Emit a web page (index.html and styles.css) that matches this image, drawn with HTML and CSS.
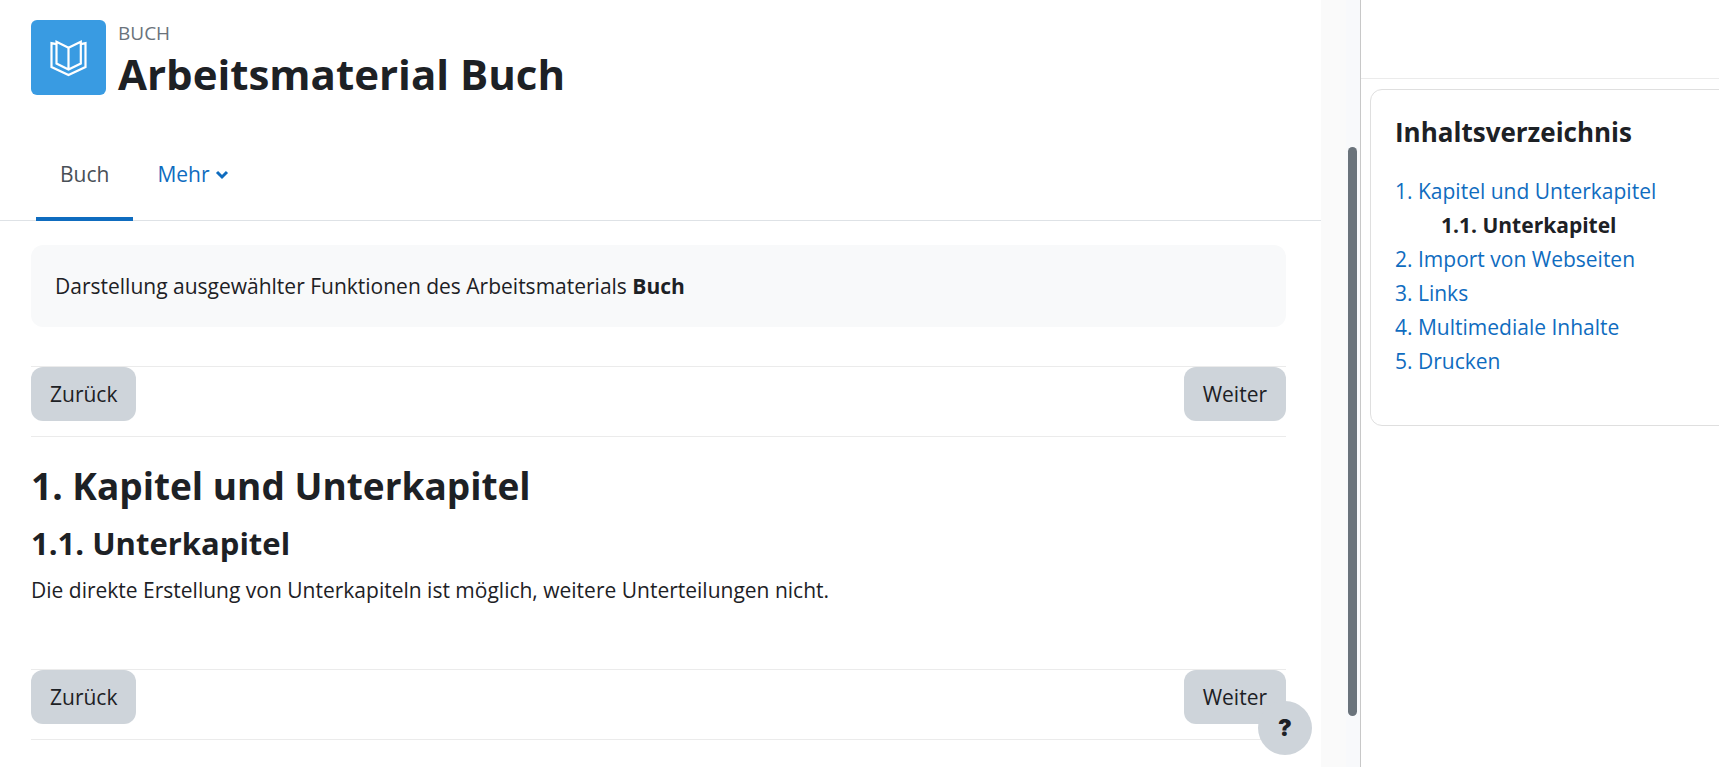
FILE: index.html
```html
<!DOCTYPE html>
<html lang="de">
<head>
  <meta charset="UTF-8" />
  <meta name="viewport" content="width=device-width, initial-scale=1" />
  <title>Arbeitsmaterial Buch</title>
  <link rel="stylesheet" href="styles.css">
</head>
<body>
  <div class="page">
    <div class="content">
      <main class="main">

        <!-- Page header -->
        <header class="page-header">
          <div class="activity-icon">
            <svg width="40" height="40" viewBox="0 0 40 40" fill="none" stroke="#fff" stroke-width="2.2" aria-hidden="true">
              <path d="M19.5 9.8 L7.5 3.8 V25.5 L19.5 31.5 L31.8 25.5 V3.8 Z M19.5 9.8 V31.5" />
              <path d="M7.5 6.2 L2.5 5.2 V29 L19.5 37 L36.5 29 V5.2 L31.8 6.2" />
            </svg>
          </div>
          <div>
            <div class="activity-type">BUCH</div>
            <h1>Arbeitsmaterial Buch</h1>
          </div>
        </header>

        <!-- Tabs -->
        <nav class="tabs">
          <a href="#" class="tab active">Buch</a>
          <a href="#" class="tab">Mehr
            <svg width="14" height="10" viewBox="0 0 14 10" fill="none" stroke="currentColor" stroke-width="3" aria-hidden="true">
              <path d="M2 2 L7 7 L12 2" />
            </svg>
          </a>
        </nav>

        <div class="body">
          <p class="description">Darstellung ausgewählter Funktionen des Arbeitsmaterials <strong>Buch</strong></p>

          <div class="book-nav">
            <button type="button" class="btn">Zurück</button>
            <button type="button" class="btn">Weiter</button>
          </div>

          <article class="chapter">
            <h2>1. Kapitel und Unterkapitel</h2>
            <h3>1.1. Unterkapitel</h3>
            <p>Die direkte Erstellung von Unterkapiteln ist möglich, weitere Unterteilungen nicht.</p>
          </article>

          <div class="book-nav">
            <button type="button" class="btn">Zurück</button>
            <button type="button" class="btn">Weiter</button>
          </div>
        </div>
      </main>

      <div class="scrollbar"><div class="thumb"></div></div>
      <button type="button" class="help" aria-label="Hilfe">?</button>
    </div>

    <!-- Block drawer -->
    <aside class="drawer">
      <div class="drawer-header"></div>
      <section class="toc">
        <h4>Inhaltsverzeichnis</h4>
        <ul>
          <li><a href="#">1. Kapitel und Unterkapitel</a>
            <ul>
              <li><strong>1.1. Unterkapitel</strong></li>
            </ul>
          </li>
          <li><a href="#">2. Import von Webseiten</a></li>
          <li><a href="#">3. Links</a></li>
          <li><a href="#">4. Multimediale Inhalte</a></li>
          <li><a href="#">5. Drucken</a></li>
        </ul>
      </section>
    </aside>
  </div>
</body>
</html>
```

FILE: styles.css
```css
* {
  box-sizing: border-box;
}

body {
  margin: 0;
  font-family: "Segoe UI", "Open Sans", "Noto Sans", sans-serif;
  font-size: 21px;
  line-height: 34px;
  color: #1d2125;
  background: #fff;
}

h1, h2, h3, h4, p, ul {
  margin: 0;
  padding: 0;
}

h1, h2, h3, h4 {
  font-weight: bold;
}

a {
  color: #0f6cbf;
  text-decoration: none;
}

.page {
  display: flex;
  min-height: 100vh;
  overflow: hidden;
}

.content {
  position: relative;
  display: flex;
  flex: 1;
  background: #fafafa;
}

.main {
  flex: 1;
  background: #fff;
}

/* Header */
.page-header {
  display: flex;
  gap: 12px;
  padding: 20px 31px 0;
}

.activity-icon {
  display: flex;
  align-items: center;
  justify-content: center;
  width: 75px;
  height: 75px;
  border-radius: 6px;
  background: #399be2;
}

.activity-type {
  font-size: 19px;
  line-height: 26px;
  color: #6a737b;
}

h1 {
  font-size: 42px;
  line-height: 56px;
}

/* Tabs */
.tabs {
  display: flex;
  margin-top: 31px;
  padding: 0 36px;
  border-bottom: 1px solid #dee2e6;
}

.tab {
  padding: 24px 24px 26px;
  margin-bottom: -1px;
  border-bottom: 4px solid transparent;
}

.tab.active {
  color: #495057;
  border-bottom-color: #0f6cbf;
}

.tab svg {
  vertical-align: 2px;
}

.body {
  padding: 24px 35px 0 31px;
}

.description {
  padding: 24px;
  border-radius: 12px;
  background: #f8f9fa;
}

.book-nav {
  display: flex;
  justify-content: space-between;
  padding-bottom: 15px;
  border-top: 1px solid #ebebeb;
  border-bottom: 1px solid #ebebeb;
}

.description + .book-nav {
  margin-top: 39px;
}

.btn {
  padding: 10px 19px;
  border: 0;
  border-radius: 12px;
  background: #ced4da;
  color: #1d2125;
  font: inherit;
  cursor: pointer;
}

/* Chapter text */
.chapter {
  padding: 24px 0 62px;
}

h2 {
  font-size: 37px;
  line-height: 50px;
  margin-bottom: 11px;
}

h3 {
  font-size: 31px;
  line-height: 42px;
  margin-bottom: 9px;
}

/* Scrollbar next to the content */
.scrollbar {
  width: 14px;
  margin-left: 25px;
  padding: 147px 3px 0 2px;
  background: #f8f9fb;
}

.thumb {
  height: 569px;
  border-radius: 5px;
  background: #6a737b;
}

.help {
  position: absolute;
  right: 48px;
  bottom: 12px;
  width: 54px;
  height: 54px;
  padding: 0;
  border: 0;
  border-radius: 50%;
  background: #ced4da;
  color: #1d2125;
  font-family: Inter, sans-serif;
  font-size: 23px;
  font-weight: 900;
  cursor: pointer;
}

/* Drawer */
.drawer {
  width: 359px;
  border-left: 1px solid #c8c8c8;
}

.drawer-header {
  height: 79px;
  border-bottom: 1px solid #ebebeb;
}

.toc {
  margin: 10px -20px 0 9px;
  padding: 24px 24px 47px;
  border: 1px solid #dfdfdf;
  border-radius: 12px;
}

.toc h4 {
  font-size: 26px;
  line-height: 36px;
  margin-bottom: 24px;
}

.toc ul {
  list-style: none;
}

.toc ul ul {
  padding-left: 46px;
}
```
